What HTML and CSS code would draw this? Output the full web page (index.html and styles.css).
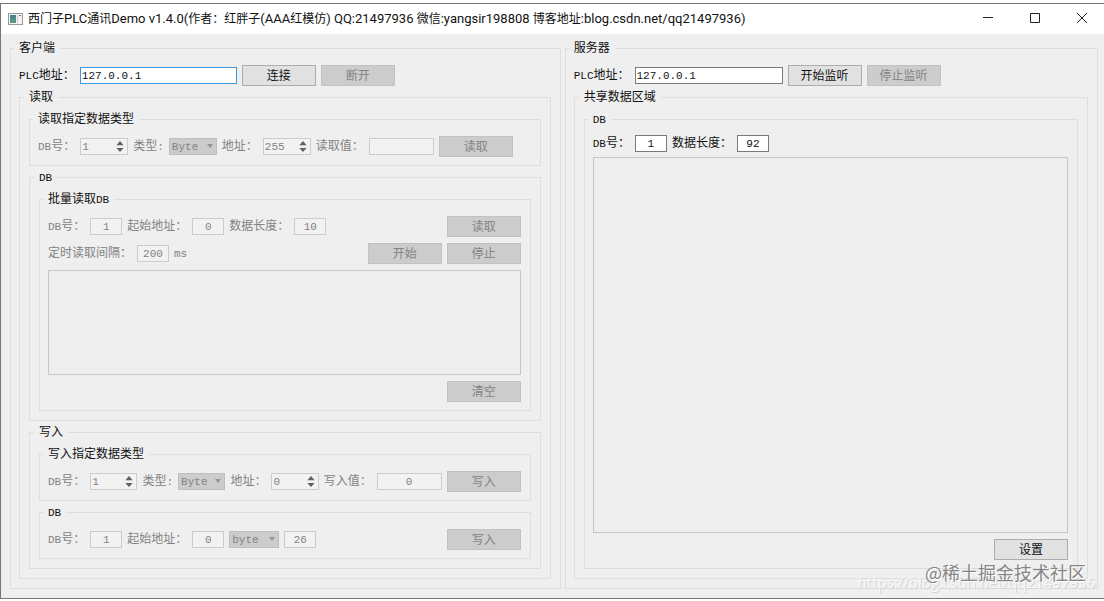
FILE: index.html
```html
<!DOCTYPE html>
<html lang="zh-CN">
<head>
    <meta charset="UTF-8">
    <meta name="viewport" content="width=device-width, initial-scale=1.0">
    <title>西门子PLC通讯Demo</title>
    <link rel="stylesheet" href="styles.css">
</head>
<body>
    <div class="window">
        <header class="title-bar">
            <svg class="app-icon" width="15" height="12" viewBox="0 0 15 12">
                <defs>
                    <linearGradient id="panel" x1="0" y1="0" x2="0" y2="1">
                        <stop offset="0" stop-color="#4a7d92"/>
                        <stop offset="1" stop-color="#5aa07c"/>
                    </linearGradient>
                </defs>
                <rect x="0.5" y="0.5" width="14" height="11" fill="#f4f4f4" stroke="#9a9a9a"/>
                <rect x="2" y="2" width="6" height="8" fill="url(#panel)"/>
                <path d="M9.5 2v8" stroke="#d0d0d0"/>
                <path d="M11 2.5h2" stroke="#777"/>
            </svg>
            <h1><span class="han">西门子</span>PLC<span class="han">通讯</span>Demo v1.4.0(<span class="han">作者：红胖子</span>(AAA<span class="han">红模仿</span>) QQ:21497936 <span class="han">微信</span>:yangsir198808 <span class="han">博客地址</span>:blog.csdn.net/qq21497936)</h1>
            <div class="window-buttons">
                <button type="button" aria-label="最小化">
                    <svg width="12" height="12" viewBox="0 0 12 12"><path d="M1 5.5h10"/></svg>
                </button>
                <button type="button" aria-label="最大化">
                    <svg width="12" height="12" viewBox="0 0 12 12"><path d="M1.5 1.5h9v9h-9z"/></svg>
                </button>
                <button type="button" aria-label="关闭">
                    <svg width="12" height="12" viewBox="0 0 12 12"><path d="M1 1l10 10M11 1L1 11"/></svg>
                </button>
            </div>
        </header>

        <main class="content">
            <!-- 客户端 -->
            <fieldset class="group client">
                <legend>客户端</legend>
                <div class="row">
                    <label for="client-ip"><span class="latin">PLC</span>地址：</label>
                    <input type="text" id="client-ip" class="ip-client" value="127.0.0.1">
                    <button type="button" class="btn">连接</button>
                    <button type="button" class="btn" disabled>断开</button>
                </div>

                <fieldset class="group grow">
                    <legend>读取</legend>
                    <fieldset class="group">
                        <legend>读取指定数据类型</legend>
                        <div class="row disabled">
                            <label for="read-db"><span class="latin">DB</span>号：</label>
                            <span class="spin">
                                <input type="number" id="read-db" value="1" disabled>
                                <svg width="8" height="12" viewBox="0 0 8 12"><path d="M0 4.5L4 0l4 4.5zM0 7.5L4 12l4-4.5z"/></svg>
                            </span>
                            <label for="read-type">类型<span class="latin">:</span></label>
                            <span class="combo">
                                <select id="read-type" disabled><option>Byte</option></select>
                            </span>
                            <label for="read-addr">地址：</label>
                            <span class="spin">
                                <input type="number" id="read-addr" value="255" disabled>
                                <svg width="8" height="12" viewBox="0 0 8 12"><path d="M0 4.5L4 0l4 4.5zM0 7.5L4 12l4-4.5z"/></svg>
                            </span>
                            <label for="read-value">读取值：</label>
                            <input type="text" id="read-value" class="value" disabled>
                            <button type="button" class="btn" disabled>读取</button>
                        </div>
                    </fieldset>

                    <fieldset class="group grow">
                        <legend><span class="latin">DB</span></legend>
                        <fieldset class="group grow">
                            <legend>批量读取<span class="latin">DB</span></legend>
                            <div class="row disabled">
                                <label for="batch-db"><span class="latin">DB</span>号：</label>
                                <input type="text" id="batch-db" class="num" value="1" disabled>
                                <label for="batch-start">起始地址：</label>
                                <input type="text" id="batch-start" class="num" value="0" disabled>
                                <label for="batch-len">数据长度：</label>
                                <input type="text" id="batch-len" class="num" value="10" disabled>
                                <button type="button" class="btn push" disabled>读取</button>
                            </div>
                            <div class="row disabled">
                                <label for="interval">定时读取间隔：</label>
                                <input type="text" id="interval" class="num" value="200" disabled>
                                <span class="latin">ms</span>
                                <button type="button" class="btn push" disabled>开始</button>
                                <button type="button" class="btn" disabled>停止</button>
                            </div>
                            <textarea class="data" aria-label="读取数据" disabled></textarea>
                            <div class="row">
                                <button type="button" class="btn push" disabled>清空</button>
                            </div>
                        </fieldset>
                    </fieldset>

                    <fieldset class="group">
                        <legend>写入</legend>
                        <fieldset class="group">
                            <legend>写入指定数据类型</legend>
                            <div class="row disabled">
                                <label for="write-db"><span class="latin">DB</span>号：</label>
                                <span class="spin">
                                    <input type="number" id="write-db" value="1" disabled>
                                    <svg width="8" height="12" viewBox="0 0 8 12"><path d="M0 4.5L4 0l4 4.5zM0 7.5L4 12l4-4.5z"/></svg>
                                </span>
                                <label for="write-type">类型<span class="latin">:</span></label>
                                <span class="combo">
                                    <select id="write-type" disabled><option>Byte</option></select>
                                </span>
                                <label for="write-addr">地址：</label>
                                <span class="spin">
                                    <input type="number" id="write-addr" value="0" disabled>
                                    <svg width="8" height="12" viewBox="0 0 8 12"><path d="M0 4.5L4 0l4 4.5zM0 7.5L4 12l4-4.5z"/></svg>
                                </span>
                                <label for="write-value">写入值：</label>
                                <input type="text" id="write-value" class="value" value="0" disabled>
                                <button type="button" class="btn push" disabled>写入</button>
                            </div>
                        </fieldset>
                        <fieldset class="group">
                            <legend><span class="latin">DB</span></legend>
                            <div class="row disabled">
                                <label for="wdb-db"><span class="latin">DB</span>号：</label>
                                <input type="text" id="wdb-db" class="num" value="1" disabled>
                                <label for="wdb-start">起始地址：</label>
                                <input type="text" id="wdb-start" class="num" value="0" disabled>
                                <span class="combo combo-wide">
                                    <select id="wdb-type" aria-label="类型" disabled><option>byte</option></select>
                                </span>
                                <input type="text" class="num" aria-label="值" value="26" disabled>
                                <button type="button" class="btn push" disabled>写入</button>
                            </div>
                        </fieldset>
                    </fieldset>
                </fieldset>
            </fieldset>

            <!-- 服务器 -->
            <fieldset class="group server">
                <legend>服务器</legend>
                <div class="row">
                    <label for="server-ip"><span class="latin">PLC</span>地址：</label>
                    <input type="text" id="server-ip" class="ip-server" value="127.0.0.1">
                    <button type="button" class="btn">开始监听</button>
                    <button type="button" class="btn" disabled>停止监听</button>
                </div>
                <fieldset class="group grow">
                    <legend>共享数据区域</legend>
                    <fieldset class="group grow shared">
                        <legend><span class="latin">DB</span></legend>
                        <div class="row">
                            <label for="server-db"><span class="latin">DB</span>号：</label>
                            <input type="text" id="server-db" class="num" value="1">
                            <label for="server-len">数据长度：</label>
                            <input type="text" id="server-len" class="num" value="92">
                        </div>
                        <textarea class="data" aria-label="共享数据"></textarea>
                        <div class="row">
                            <button type="button" class="btn push">设置</button>
                        </div>
                    </fieldset>
                </fieldset>
            </fieldset>
        </main>
    </div>

    <div class="watermark-url">https://blog.csdn.net/qq21497936</div>
    <div class="watermark">@稀土掘金技术社区</div>
</body>
</html>
```
FILE: styles.css
```css
* {
    box-sizing: border-box;
}
body {
    margin: 0;
    height: 100vh;
    min-height: 560px;
    padding: 3px 0 2px;
    position: relative;
    overflow: hidden;
    background-color: #fff;
    color: #111;
    font-family: "Liberation Mono", "Noto Sans CJK SC", monospace;
    font-size: 12px;
    line-height: 16px;
}
.window {
    display: flex;
    flex-direction: column;
    height: 100%;
    border: 1px solid #777;
    border-right: 0;
    background-color: #efefef;
}

/* 标题栏 */
.title-bar {
    display: flex;
    align-items: center;
    flex: none;
    height: 30px;
    padding-left: 7px;
    background-color: #fff;
}
.title-bar h1 {
    margin: 0 0 0 5px;
    font-family: Roboto, "Noto Sans CJK SC", sans-serif;
    font-size: 13px;
    font-weight: normal;
    white-space: nowrap;
}
.title-bar .han {
    font-size: 12px;
}
.window-buttons {
    display: flex;
    margin-left: auto;
}
.window-buttons button {
    display: flex;
    align-items: center;
    justify-content: center;
    width: 47px;
    height: 30px;
    padding: 0 0 2px 2px;
    border: 0;
    background: none;
}
.window-buttons path {
    fill: none;
    stroke: #222;
    stroke-width: 1;
}

.content {
    display: flex;
    flex: 1;
    gap: 4px;
    padding: 6px 6px 9px 9px;
}

/* 分组框 */
.group {
    display: flex;
    flex-direction: column;
    gap: 6px;
    min-width: 0;
    margin: 0;
    padding: 9px 9px 8px 8px;
    border: 1px solid #dedede;
}
.group legend {
    height: 16px;
    margin-left: -5px;
    padding: 0 5px;
    line-height: 18px;
}
.group:has(> .group) {
    gap: 3px;
    padding: 6px 9px 9px;
}
.group.client,
.group.server {
    padding: 9px 9px 9px 8px;
}
.client {
    flex: 551 1 0;
}
.server {
    flex: 533 1 0;
}
.grow {
    flex: 1;
}

.row {
    display: flex;
    align-items: center;
    gap: 5px;
    min-height: 21px;
    white-space: nowrap;
}
.row label {
    line-height: 18px;
}
.shared {
    padding-top: 6px;
    gap: 3px;
}
.shared .data {
    margin-bottom: 3px;
}
.disabled {
    color: #838383;
}
.latin {
    font-size: 11px;
}
.push {
    margin-left: auto;
}

/* 控件 */
input,
select,
textarea {
    margin: 0;
    border: 1px solid #7a7a7a;
    border-radius: 0;
    background-color: #fff;
    color: #111;
    font-family: "Liberation Mono", "Noto Sans CJK SC", monospace;
    font-size: 11px;
}
input {
    height: 17px;
    padding: 0 1px;
}
input:disabled {
    border-color: #ccc;
    background-color: #f2f2f2;
    color: #838383;
}
.ip-client {
    width: 157px;
    border-color: #3f97dc;
}
.ip-server {
    width: 148px;
}
.num {
    width: 32px;
    text-align: center;
}
.value {
    width: 65px;
    text-align: center;
}
.btn {
    flex: none;
    width: 74px;
    height: 21px;
    padding: 3px 0 0;
    border: 1px solid #adadad;
    background-color: #e1e1e1;
    color: #111;
    font-family: "Liberation Mono", "Noto Sans CJK SC", monospace;
    font-size: 12px;
    line-height: 16px;
}
.btn:disabled {
    border-color: #c2c2c2;
    background-color: #ccc;
    color: #838383;
}

.spin,
.combo {
    position: relative;
    display: flex;
    width: 48px;
}
.combo-wide {
    width: 50px;
}
.spin input {
    width: 100%;
    appearance: textfield;
}
.spin input::-webkit-inner-spin-button {
    display: none;
}
.spin svg {
    position: absolute;
    top: 3px;
    right: 4px;
    height: 11px;
    fill: #606060;
}
.combo select {
    width: 100%;
    height: 17px;
    padding: 0 2px;
    appearance: none;
    border-color: #bfbfbf;
    background-color: #ccc;
    color: #838383;
    opacity: 1;
}
.combo::after {
    content: "";
    position: absolute;
    top: 6px;
    right: 4px;
    border: 3px solid transparent;
    border-top: 4px solid #969696;
    border-bottom: 0;
}
.data {
    display: block;
    flex: 1;
    width: 100%;
    min-height: 40px;
    padding: 2px;
    resize: none;
    border-color: #c6c6c6;
    background-color: #efefef;
}

/* 水印 */
.watermark,
.watermark-url {
    position: absolute;
    white-space: nowrap;
    pointer-events: none;
}
.watermark {
    right: 18px;
    bottom: 17px;
    color: #858585;
    font-family: "Noto Sans CJK SC", sans-serif;
    font-size: 18px;
    line-height: 24px;
    text-shadow: 1px 1px 0 #fff;
}
.watermark-url {
    right: 9px;
    bottom: 8px;
    color: #f8f8f8;
    font-family: "Open Sans", sans-serif;
    font-size: 15px;
    line-height: 22px;
    text-shadow: 1px 1px 0 #d2d2d2;
}
```
